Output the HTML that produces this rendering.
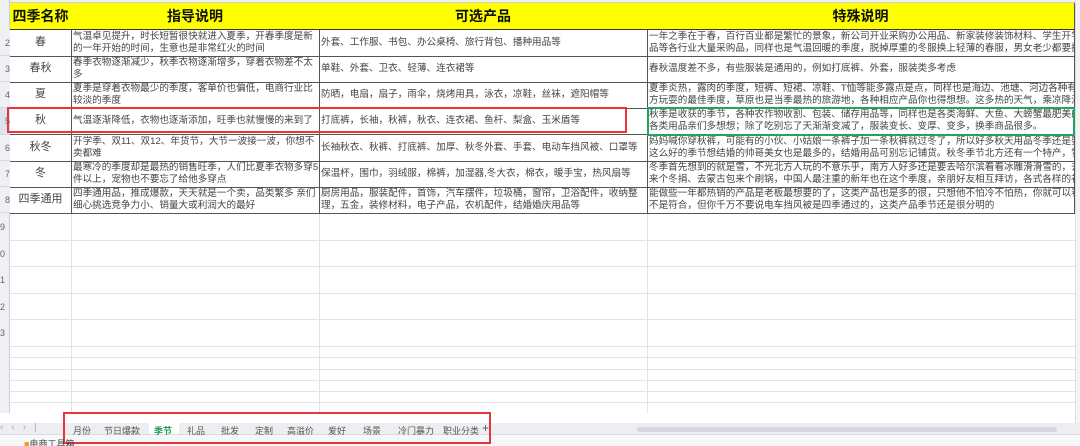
<!DOCTYPE html>
<html><head><meta charset="utf-8"><style>
*{margin:0;padding:0;box-sizing:border-box}
body{width:1080px;height:446px;overflow:hidden;background:#fff;font-family:"Liberation Sans","Noto Sans CJK SC",sans-serif;position:relative;color:#333}
.a{position:absolute}
.c{position:absolute;overflow:hidden;font-size:9.6px;line-height:12px;color:#444;border-right:1px solid #555;border-bottom:1px solid #555;padding:1px 2px 0;white-space:nowrap}
.m{line-height:25px;padding-top:0}
.h{background:#ffff00;font-weight:bold;color:#111;font-size:14px;text-align:center;line-height:26px;border-bottom:1px solid #333;padding:0}
.n{text-align:center;line-height:25px;font-size:11px;padding:0}
.rn{position:absolute;left:0;width:10px;font-size:9px;color:#666;background:#eef0f4;border-bottom:1px solid #d5d8de;text-align:right;overflow:hidden}
.gl{position:absolute;left:10px;width:1065px;height:1px;background:#dfe3ea}
.tab{position:absolute;top:424px;font-size:9px;color:#555}
</style></head><body>
<div class="a" style="left:0;top:0;width:1080px;height:3px;background:#eef0f4;border-bottom:1px solid #ccc"></div>
<div class="a" style="left:0;top:0;width:10px;height:413px;background:#eef0f4;border-right:1px solid #ccd"></div>
<div class="c h" style="left:10px;top:3px;width:62px;height:27px">四季名称</div>
<div class="c h" style="left:71px;top:3px;width:249px;height:27px">指导说明</div>
<div class="c h" style="left:319px;top:3px;width:329px;height:27px">可选产品</div>
<div class="c h" style="left:647px;top:3px;width:428px;height:27px">特殊说明</div>

<div class="rn" style="top:30px;height:26px;line-height:26px">2</div>
<div class="c n" style="left:10px;top:30px;width:62px;height:27px">春</div>
<div class="c" style="left:71px;top:30px;width:249px;height:27px">气温卓见提升，时长短暂很快就进入夏季，开春季度是新<br>的一年开始的时间，生意也是非常红火的时间</div>
<div class="c m" style="left:319px;top:30px;width:329px;height:27px">外套、工作服、书包、办公桌椅、旅行背包、播种用品等</div>
<div class="c" style="left:647px;top:30px;width:428px;height:27px">一年之季在于春，百行百业都是繁忙的景象，新公司开业采购办公用品、新家装修装饰材料、学生开学<br>品等各行业大量采购品，同样也是气温回暖的季度，脱掉厚重的冬服换上轻薄的春服，男女老少都要换</div>

<div class="rn" style="top:56px;height:26px;line-height:26px">3</div>
<div class="c n" style="left:10px;top:56px;width:62px;height:27px">春秋</div>
<div class="c" style="left:71px;top:56px;width:249px;height:27px">春季衣物逐渐减少，秋季衣物逐渐增多，穿着衣物差不太<br>多</div>
<div class="c m" style="left:319px;top:56px;width:329px;height:27px">单鞋、外套、卫衣、轻薄、连衣裙等</div>
<div class="c m" style="left:647px;top:56px;width:428px;height:27px">春秋温度差不多，有些服装是通用的，例如打底裤、外套，服装类多考虑</div>

<div class="rn" style="top:82px;height:26px;line-height:26px">4</div>
<div class="c n" style="left:10px;top:82px;width:62px;height:27px">夏</div>
<div class="c" style="left:71px;top:82px;width:249px;height:27px">夏季是穿着衣物最少的季度，客单价也偏低，电商行业比<br>较淡的季度</div>
<div class="c m" style="left:319px;top:82px;width:329px;height:27px">防晒，电扇，扇子，雨伞，烧烤用具，泳衣，凉鞋，丝袜，遮阳帽等</div>
<div class="c" style="left:647px;top:82px;width:428px;height:27px">夏季炎热，露肉的季度，短裤、短裙、凉鞋、T恤等能多露点是点，同样也是海边、池塘、河边各种有<br>方玩耍的最佳季度，草原也是当季最热的旅游地，各种相应产品你也得想想。这多热的天气，乘凉降温</div>

<div class="rn" style="top:108px;height:27px;line-height:27px;background:#dde3ec;color:#1a9a5a">5</div>
<div class="c n" style="left:10px;top:108px;width:62px;height:27px">秋</div>
<div class="c m" style="left:71px;top:108px;width:249px;height:27px">气温逐渐降低，衣物也逐渐添加，旺季也就慢慢的来到了</div>
<div class="c m" style="left:319px;top:108px;width:329px;height:27px">打底裤，长袖，秋裤，秋衣、连衣裙、鱼杆、梨盒、玉米盾等</div>
<div class="c" style="left:647px;top:108px;width:428px;height:27px">秋季是收获的季节，各种农作物收割、包装、储存用品等，同样也是各类海鲜、大鱼、大螃蟹最肥美的<br>各类用品亲们多想想；除了吃别忘了天渐渐变减了，服装变长、变厚、变多，换季商品很多。</div>

<div class="rn" style="top:135px;height:26px;line-height:26px">6</div>
<div class="c n" style="left:10px;top:135px;width:62px;height:27px">秋冬</div>
<div class="c" style="left:71px;top:135px;width:249px;height:27px">开学季、双11、双12、年货节，大节一波接一波，你想不<br>卖都难</div>
<div class="c m" style="left:319px;top:135px;width:329px;height:27px">长袖秋衣、秋裤、打底裤、加厚、秋冬外套、手套、电动车挡风被、口罩等</div>
<div class="c" style="left:647px;top:135px;width:428px;height:27px">妈妈喊你穿秋裤，可能有的小伙、小姑娘一条裤子加一条秋裤就过冬了，所以好多秋天用品冬季还是要<br>这么好的季节想结婚的帅哥美女也是最多的，结婚用品可别忘记铺货。秋冬季节北方还有一个特产，雪</div>

<div class="rn" style="top:161px;height:26px;line-height:26px">7</div>
<div class="c n" style="left:10px;top:161px;width:62px;height:27px">冬</div>
<div class="c" style="left:71px;top:161px;width:249px;height:27px">最寒冷的季度却是最热的销售旺季，人们比夏季衣物多穿5<br>件以上，宠物也不要忘了给他多穿点</div>
<div class="c m" style="left:319px;top:161px;width:329px;height:27px">保温杯，围巾，羽绒服，棉裤，加湿器,冬大衣，棉衣，暖手宝，热风扇等</div>
<div class="c" style="left:647px;top:161px;width:428px;height:27px">冬季首先想到的就是雪，不光北方人玩的不意乐乎，南方人好多还是要去哈尔滨看看冰雕滑滑雪的，去<br>来个冬捐、去蒙古包来个刷锅，中国人最注重的新年也在这个季度，亲朋好友相互拜访，各式各样的礼</div>

<div class="rn" style="top:187px;height:26px;line-height:26px">8</div>
<div class="c n" style="left:10px;top:187px;width:62px;height:27px">四季通用</div>
<div class="c" style="left:71px;top:187px;width:249px;height:27px">四季通用品，推成爆款，天天就是一个卖，品类繁多 亲们<br>细心挑选竞争力小、销量大或利润大的最好</div>
<div class="c" style="left:319px;top:187px;width:329px;height:27px">厨房用品，服装配件，首饰，汽车摆件，垃圾桶，窗帘，卫浴配件，收纳整<br>理，五金，装修材料，电子产品，农机配件，结婚婚庆用品等</div>
<div class="c" style="left:647px;top:187px;width:428px;height:27px">能做些一年都热销的产品是老板最想要的了，这类产品也是多的很，只想他不怕冷不怕热，你就可以看<br>不是符合，但你千万不要说电车挡风被是四季通过的，这类产品季节还是很分明的</div>

<div class="gl" style="top:240px"></div><div class="gl" style="top:266px"></div><div class="gl" style="top:293px"></div><div class="gl" style="top:319px"></div><div class="gl" style="top:346px"></div><div class="gl" style="top:357px"></div><div class="gl" style="top:369px"></div><div class="gl" style="top:380px"></div><div class="gl" style="top:391px"></div><div class="gl" style="top:402px"></div>
<div class="a" style="left:71px;top:214px;width:1px;height:199px;background:#dfe3ea"></div>
<div class="a" style="left:319px;top:214px;width:1px;height:199px;background:#dfe3ea"></div>
<div class="a" style="left:647px;top:214px;width:1px;height:199px;background:#dfe3ea"></div>
<div class="a" style="left:0;top:222px;font-size:9px;color:#666">9</div>
<div class="a" style="left:0;top:249px;font-size:9px;color:#666">0</div>
<div class="a" style="left:0;top:275px;font-size:9px;color:#666">1</div>
<div class="a" style="left:0;top:302px;font-size:9px;color:#666">2</div>
<div class="a" style="left:0;top:328px;font-size:9px;color:#666">3</div>
<div class="a" style="left:1075px;top:0;width:5px;height:423px;background:#f3f4f6;border-left:1px solid #ddd"></div>
<div class="a" style="left:647px;top:107px;width:428px;height:29px;border:2px solid #21a366"></div>
<div class="a" style="left:7px;top:107px;width:620px;height:26px;border:2px solid #e8343a"></div>
<div class="a" style="left:0;top:423px;width:1080px;height:11px;background:#eceef2"></div>
<div class="a" style="left:0;top:434px;width:1080px;height:12px;background:#f6f7f9;border-top:1px solid #ddd"></div>
<div class="a" style="left:0;top:422px;font-size:10px;color:#aaa;letter-spacing:8px">‹‹›|</div>
<div class="a" style="left:149px;top:423px;width:30px;height:11px;background:#fff"></div>
<div class="tab" style="left:73px">月份</div>
<div class="tab" style="left:104px">节日爆款</div>
<div class="tab" style="left:154px;color:#1a9a5a;font-weight:bold">季节</div>
<div class="tab" style="left:187px">礼品</div>
<div class="tab" style="left:221px">批发</div>
<div class="tab" style="left:255px">定制</div>
<div class="tab" style="left:287px">高溢价</div>
<div class="tab" style="left:328px">爱好</div>
<div class="tab" style="left:363px">场景</div>
<div class="tab" style="left:398px">冷门暴力</div>
<div class="tab" style="left:443px">职业分类</div>
<div class="a" style="left:482px;top:421px;font-size:12px;color:#555">+</div>
<div class="a" style="left:63px;top:412px;width:428px;height:32px;border:2px solid #e8343a"></div>
<div class="a" style="left:637px;top:427px;width:420px;height:5px;background:#d4d7dd;border-radius:3px"></div>
<div class="a" style="left:24px;top:438px;font-size:9px;color:#444;height:8px;overflow:hidden;line-height:12px"><span style="color:#e8a020">■</span>电商工具箱</div>
</body></html>
